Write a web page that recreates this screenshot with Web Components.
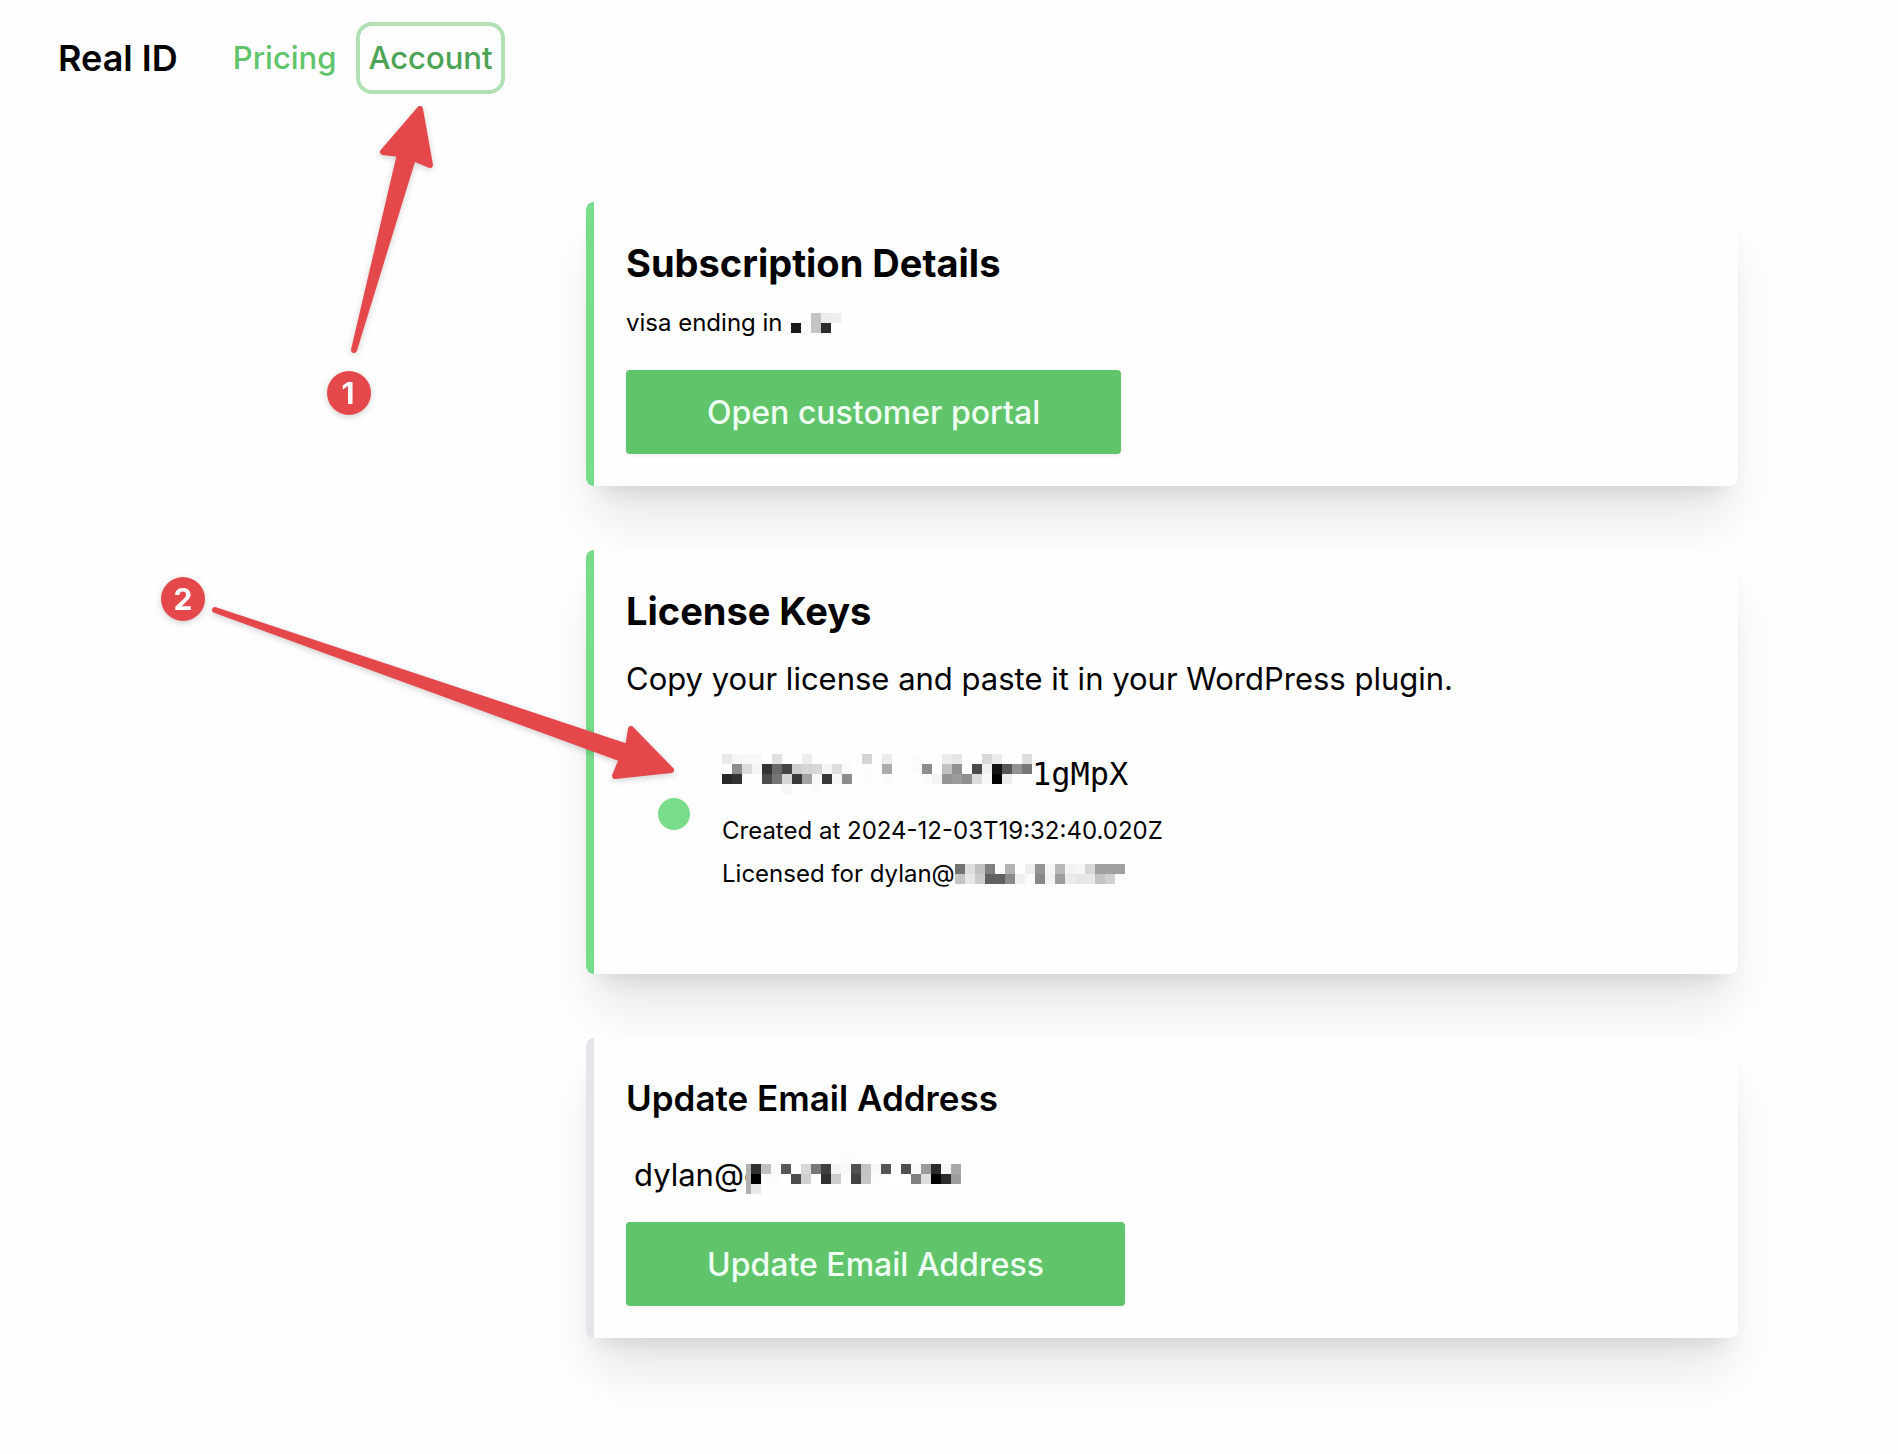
<!DOCTYPE html>
<html lang="en">
<head>
<meta charset="utf-8">
<meta name="viewport" content="width=device-width, initial-scale=1">
<title>Real ID – Account</title>
<style>
  body { margin: 0; background: #fefefe; color: #000; font-family: Inter, "Liberation Sans", sans-serif; font-size: 31px; line-height: 48px; }
</style>
</head>
<body>
<account-page></account-page>

<script>
const define = (name, html, setup) => customElements.define(name, class extends HTMLElement {
  connectedCallback() {
    if (this.shadowRoot) return;
    const t = document.createElement('template');
    t.innerHTML = html;
    this.attachShadow({ mode: 'open' }).append(t.content.cloneNode(true));
    if (setup) setup(this, this.shadowRoot);
  }
});

/* Censored text: rows of two-digit grey levels, ".." is a blank cell. */
const MASKS = {
  card: ['....c4ecef', '1a..c42c..'],
  key: [
    'e9f6f8f8..e0....ee..........d5..ec....fb....ece6fc..d8eb....de',
    '..8edcf5336944cdd5d8f5defa..fcfdaa....fb8e..c292..4cf014579278',
    '2833....4c74d638a3f838f88c..fc..fb......fbf3949c90dcf803ec',
    '............f6....fb'
  ],
  owner: [
    '73dec080fcb3fdee94f5b9f2f6d7a0a0a0',
    'c4e6cc60608af0fb88f49debe6e8c3d0fc'
  ],
  email: [
    '..................fcfc',
    '30c0fa57fdd87840f5f850c3f855ff50f99b2cf5aa',
    '00fbfcff4cd0ff30ccfe42c5fcffffff80dd002c9e',
    'e8'
  ]
};

define('pixel-mask', `
  <style>
    :host { display: block; flex: none; }
    svg { display: block; shape-rendering: crispEdges; }
  </style>
  <svg aria-hidden="true"></svg>`, (host, root) => {
  const rows = MASKS[host.getAttribute('kind')];
  const cols = Math.max(...rows.map(r => r.length / 2));
  const svg = root.querySelector('svg');
  svg.setAttribute('width', cols * 10);
  svg.setAttribute('height', rows.length * 10);
  svg.innerHTML = rows.map((row, y) => row.match(/../g).map((g, x) =>
    g === '..' ? '' : `<rect x="${x * 10}" y="${y * 10}" width="10" height="10" fill="#${g + g + g}"/>`).join('')).join('');
});

define('nav-link', `
  <style>
    :host { display: block; }
    a { display: block; padding: 8px; border: 4px solid transparent; border-radius: 16px; color: #5fc46a; text-decoration: none; font-weight: 500; }
    :host([current]) a { color: #4da355; border-color: #afe1b4; }
  </style>
  <a href="#"><slot></slot></a>`, (host, root) => {
  if (host.hasAttribute('current')) root.querySelector('a').setAttribute('aria-current', 'page');
});

define('site-header', `
  <style>
    :host { display: flex; align-items: center; padding: 22px 58px; }
    .brand { font-size: 36px; font-weight: 600; margin-right: 43px; }
    nav { display: flex; gap: 8px; }
  </style>
  <div class="brand">Real ID</div>
  <nav><nav-link>Pricing</nav-link><nav-link current>Account</nav-link></nav>`);

define('info-card', `
  <style>
    :host { display: block; }
    section { display: flex; flex-direction: column; align-items: flex-start; padding: 32px; border-left: 8px solid #79dc8a; border-radius: 8px; background: #fefefe;
      box-shadow: 0 40px 50px -10px rgba(0,0,0,.1), 0 16px 20px -12px rgba(0,0,0,.1); }
    :host([muted]) section { border-color: #e5e5eb; }
  </style>
  <section><slot></slot></section>`);

define('action-button', `
  <style>
    :host { display: block; }
    button { display: block; margin: 0; border: 0; border-radius: 4px; padding: 19px 81px 17px; background: #5fc46a; color: #f0fff4; font: inherit; font-size: 32px; font-weight: 500; line-height: 48px; box-shadow: 0 2px 4px rgba(0,0,0,.05); cursor: pointer; }
  </style>
  <button type="button"><slot></slot></button>`);

define('license-key', `
  <style>
    :host { display: flex; align-items: center; gap: 32px; padding: 0 32px; }
    .dot { width: 32px; height: 32px; border-radius: 50%; background: #79dc8a; }
    .body { padding-top: 14px; }
    .row { display: flex; align-items: center; font-size: 24px; line-height: 36px; }
    .key { font: 32px/48px "DejaVu Sans Mono", "Liberation Mono", monospace; margin-bottom: 15px; }
    .row + .row + .row { margin-top: 7px; }
  </style>
  <div class="dot"></div>
  <div class="body">
    <div class="row key"><pixel-mask kind="key"></pixel-mask>1gMpX</div>
    <div class="row">Created at 2024-12-03T19:32:40.020Z</div>
    <div class="row">Licensed for dylan@<pixel-mask kind="owner"></pixel-mask></div>
  </div>`);

define('email-field', `
  <style>
    :host { display: flex; align-items: center; }
    input { display: block; box-sizing: border-box; width: 120px; height: 66px; margin: 0; padding: 0 0 0 8px; border: 0; background: transparent; color: inherit; font: inherit; outline: none; }
    .edge { width: 5px; height: 30px; margin-top: 10px; background: #b0b0b0; }
  </style>
  <input type="text" aria-label="Email address" value="dylan@g"><div class="edge"></div><pixel-mask kind="email"></pixel-mask>`);

define('step-guide', `
  <style>
    :host { position: absolute; left: 0; top: 0; pointer-events: none; }
    svg { display: block; filter: drop-shadow(0 2px 3px rgba(0,0,0,.18)); }
    path { fill: #e5484b; stroke: #e5484b; stroke-width: 6; stroke-linejoin: round; }
    circle { fill: #e5484b; }
    text { fill: #fff; font-size: 30px; font-weight: 700; text-anchor: middle; }
  </style>
  <svg width="700" height="800" viewBox="0 0 700 800">
    <path d="M420 109 L383 152 L400 154 L354 350 L413 158 L430 165 Z"/>
    <path d="M215 610 L628 747 L631 729 L671 770 L615 776 L622 759 Z"/>
    <circle cx="349" cy="393" r="22"/><text x="348" y="404">1</text>
    <circle cx="183" cy="599" r="22"/><text x="183" y="610">2</text>
  </svg>`);

define('account-page', `
  <style>
    :host { display: block; position: relative; }
    main { display: flex; flex-direction: column; gap: 64px; width: 1152px; max-width: 80%; box-sizing: border-box; margin: 86px 160px 116px auto; }
    h2, p { margin: 0; }
    h2 { font-size: 38px; line-height: 58px; font-weight: 700; }
    .small { font-size: 35px; line-height: 56px; font-weight: 600; margin-bottom: 15px; }
    .method { display: flex; align-items: center; gap: 8px; margin: 13px 0 29px; font-size: 24px; line-height: 36px; }
    .copy { margin: 15px 0 33px; }
    license-key { margin-bottom: 50px; }
    email-field { margin-bottom: 15px; }
  </style>
  <site-header></site-header>
  <main>
    <info-card>
      <h2>Subscription Details</h2>
      <p class="method">visa ending in <pixel-mask kind="card"></pixel-mask></p>
      <action-button>Open customer portal</action-button>
    </info-card>
    <info-card>
      <h2>License Keys</h2>
      <p class="copy">Copy your license and paste it in your WordPress plugin.</p>
      <license-key></license-key>
    </info-card>
    <info-card muted>
      <h2 class="small">Update Email Address</h2>
      <email-field></email-field>
      <action-button>Update Email Address</action-button>
    </info-card>
  </main>
  <step-guide></step-guide>`);
</script>
</body>
</html>
